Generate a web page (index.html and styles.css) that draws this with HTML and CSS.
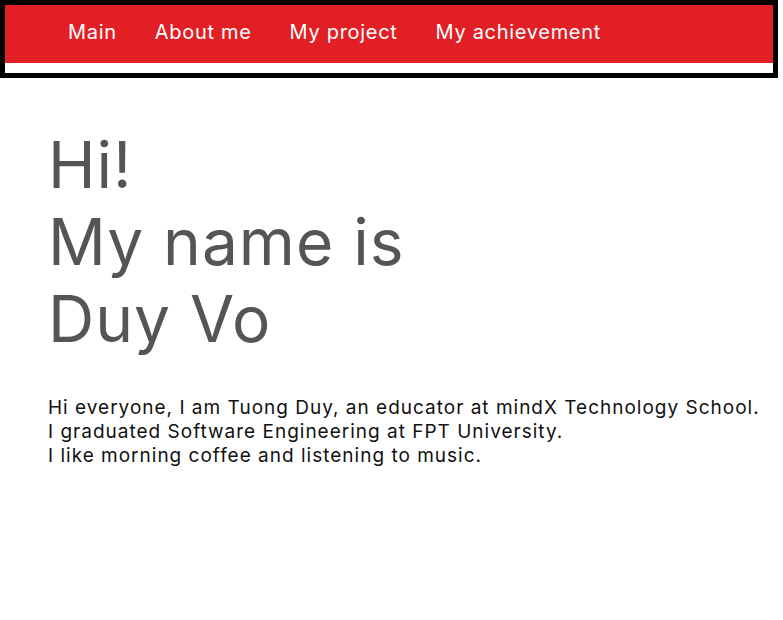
FILE: index.html
```html
<!DOCTYPE html>
<html lang="en">
<head>
<meta charset="utf-8">
<title>Duy Vo</title>
<link rel="stylesheet" href="styles.css">
</head>
<body>
<header class="site-header">
  <nav class="nav">
    <a class="nav-link" href="#">Main</a>
    <a class="nav-link" href="#">About me</a>
    <a class="nav-link" href="#">My project</a>
    <a class="nav-link" href="#">My achievement</a>
  </nav>
</header>
<main class="intro">
  <h1 class="intro-title">Hi!<br>My name is<br>Duy Vo</h1>
  <p class="intro-text">Hi everyone, I am Tuong Duy, an educator at mindX Technology School.<br>I graduated Software Engineering at FPT University.<br>I like morning coffee and listening to music.</p>
</main>
</body>
</html>
```

FILE: styles.css
```css
* { box-sizing: border-box; }
body {
  margin: 0;
  background: #fff;
  font-family: Inter, "Open Sans", sans-serif;
}
.site-header {
  margin-right: 5px;
  border: 5px solid #000;
  padding-bottom: 10px;
  background: #fff;
}
.nav {
  display: flex;
  gap: 38px;
  height: 58px;
  align-items: center;
  padding-left: 63px;
  padding-bottom: 4px;
  background: #e31f26;
}
.nav-link {
  color: #fff;
  text-decoration: none;
  font-size: 20px;
  letter-spacing: 0.7px;
}
.intro {
  padding: 48px 0 0 48px;
}
.intro-title {
  margin: 0;
  font-size: 64px;
  font-weight: 400;
  line-height: 77px;
  letter-spacing: 1px;
  color: #555;
}
.intro-text {
  margin: 39px 0 0;
  font-size: 19px;
  line-height: 24px;
  letter-spacing: 1px;
  white-space: nowrap;
  color: #111;
}
```
